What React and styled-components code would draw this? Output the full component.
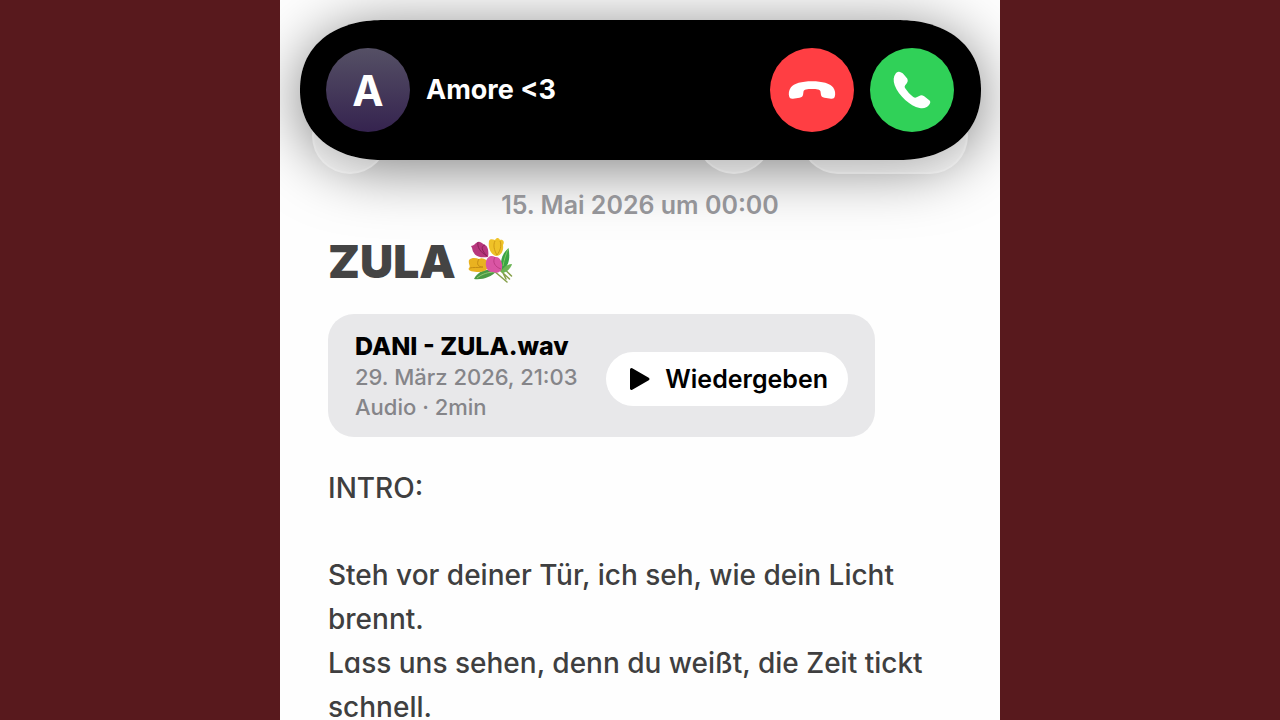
/**
 * Note screen with an incoming call banner on top.
 *
 * The banner floats over the note; the toolbar buttons of the note only peek
 * out below it. The note itself holds a title, an audio attachment and lyrics.
 */

import styled, { createGlobalStyle, css } from 'styled-components';

/* ── Data ───────────────────────────────────────── */

const CALLER = { initial: 'A', name: 'Amore <3' };

const NOTE = {
  date: '15. Mai 2026 um 00:00',
  title: 'ZULA',
  section: 'INTRO:',
  lines: [
    'Steh vor deiner Tür, ich seh, wie dein Licht brennt.',
    'Lass uns sehen, denn du weißt, die Zeit tickt schnell.',
  ],
};

const AUDIO = {
  name: 'DANI - ZULA.wav',
  recorded: '29. März 2026, 21:03',
  info: 'Audio · 2min',
};

/* ── Icons ──────────────────────────────────────── */

function HangUpIcon() {
  return (
    <svg width="84" height="84" viewBox="0 0 84 84" fill="#fff" aria-hidden="true">
      <path d="M42 33.2C31.5 33.2 24 35.4 20.8 39.4C18.8 42 18.4 45.7 19.2 48.6C19.7 50.4 21 51 23 50.7L29.6 49.7C31.8 49.3 32.8 48.2 33.1 46.4L33.5 43.6C33.8 42.3 34.5 41.8 36 41.5C37.8 41.1 39.6 41 42 41C44.4 41 46.2 41.1 48 41.5C49.5 41.8 50.2 42.3 50.5 43.6L50.9 46.4C51.2 48.2 52.2 49.3 54.4 49.7L61 50.7C63 51 64.3 50.4 64.8 48.6C65.6 45.7 65.2 42 63.2 39.4C60 35.4 52.5 33.2 42 33.2Z" />
    </svg>
  );
}

function AnswerIcon() {
  return (
    <svg width="84" height="84" viewBox="0 0 84 84" fill="#fff" aria-hidden="true">
      <path d="M29.8 24C28.2 23.2 27 23.9 25.7 25.6C23.3 28.8 23.1 32.8 24.7 37.2C26.7 42.6 30.5 47.6 35.2 51.9C39.8 56 44.8 58.9 49.6 59.9C54 60.7 57.2 59.5 59.2 56.7C60.4 55 60.7 53.5 59.6 52.4L54.2 48.3C52.5 47.1 50.7 47 49.2 47.9L46.6 49.3C45.5 49.9 44.5 49.8 43.3 48.9C40.1 46.5 37.3 43.4 35.2 40.2C34.5 39.1 34.5 38.1 35.2 37.2L36.8 35.2C37.9 33.8 38 32.2 37.2 30.6L33.6 26.2C32.4 24.9 31 24.4 29.8 24Z" />
    </svg>
  );
}

function PlayIcon() {
  return (
    <svg width="22" height="24" viewBox="0 0 22 24" aria-hidden="true">
      <path d="M2.5 2.5L19 12L2.5 21.5Z" fill="#000" stroke="#000" strokeWidth="3" strokeLinejoin="round" />
    </svg>
  );
}

function BouquetIcon() {
  return (
    <svg width="48" height="48" viewBox="0 0 48 48" role="img" aria-label="Blumenstrauß">
      {/* stems and leaves */}
      <path d="M23 25L41.5 42M26 22L43.5 39M19 28L39 45M30 26L38 42" fill="none" stroke="#86a04a" strokeWidth="1.5" strokeLinecap="round" />
      <path d="M33 31C32 21 36 15 40.500 11C42 19 42 27 35 34Z" fill="#3ba345" />
      <path d="M35 29C36 23 38 17 40 12" fill="none" stroke="#7ccc5c" strokeWidth="1" />
      <path d="M6 42C10 34 19 31 29 34C23 40 15 43 6 42Z" fill="#4a9a45" />
      <path d="M9 41C14 37 20 35 27 35" fill="none" stroke="#93c973" strokeWidth="1" />
      <path d="M33 34C37 29 40 27 44 27C43 31 39 35 35 36Z" fill="#6bb455" />
      {/* tulips */}
      <path d="M21 4C23 1 25 3 27 3C29 0 31 1 32 3C35 2 37 5 35 8C36 14 33 19 28 19C22 17 20 10 21 4Z" fill="#efc228" />
      <path d="M27 4C25 8 26 13 29 18M32 4C34 9 32 14 29 18" fill="none" stroke="#cf9a15" strokeWidth="1" />
      <path d="M1 23C4 20 8 21 11 22C15 20 19 23 21 26C21 31 18 35 11 35C4 35 -1 33 1 31C3 29 0 27 1 23Z" fill="#e9b220" />
      <path d="M11 22C8 27 10 30 15 30C9 31 5 30 2 31" fill="none" stroke="#c48c14" strokeWidth="1" />
      <path d="M3 9C6 9 7 6 10 5C13 4 14 7 17 8C20 9 21 15 20 20C14 21 8 20 6 16C4 14 5 12 3 9Z" fill="#b7377d" />
      <path d="M10 5C9 10 12 15 19 19M17 8C13 9 13 13 19 19" fill="none" stroke="#8c2059" strokeWidth="1" />
      <path d="M18 25C19 19 24 18 27 20C32 19 35 26 34 31C33 35 29 37 25 35C20 36 17 30 18 25Z" fill="#da55a4" />
      <path d="M27 20C24 25 27 30 33 32" fill="none" stroke="#bd3c84" strokeWidth="1" />
    </svg>
  );
}

/* ── Component ──────────────────────────────────── */

export default function App() {
  return (
    <>
      <GlobalStyle />
      <Page>
        <Screen>
          <CallBanner aria-label="Eingehender Anruf">
            <Avatar>{CALLER.initial}</Avatar>
            <CallerName>{CALLER.name}</CallerName>
            <CallActions>
              <CallButton type="button" $color="#ff3e43" aria-label="Ablehnen">
                <HangUpIcon />
              </CallButton>
              <CallButton type="button" $color="#30d158" aria-label="Annehmen">
                <AnswerIcon />
              </CallButton>
            </CallActions>
          </CallBanner>

          <Toolbar>
            <ToolButton type="button" aria-label="Zurück" />
            <ToolGroup>
              <ToolButton type="button" aria-label="Widerrufen" />
              <ToolButton type="button" $wide aria-label="Teilen" />
            </ToolGroup>
          </Toolbar>

          <Note>
            <NoteDate>{NOTE.date}</NoteDate>
            <NoteTitle>
              {NOTE.title}
              <BouquetIcon />
            </NoteTitle>

            <Attachment>
              <div>
                <FileName>{AUDIO.name}</FileName>
                <FileMeta>{AUDIO.recorded}</FileMeta>
                <FileMeta>{AUDIO.info}</FileMeta>
              </div>
              <PlayButton type="button">
                <PlayIcon />
                Wiedergeben
              </PlayButton>
            </Attachment>

            <Lyrics>
              <p>{NOTE.section}</p>
              <div>
                {NOTE.lines.map((line) => (
                  <p key={line}>{line}</p>
                ))}
              </div>
            </Lyrics>
          </Note>
        </Screen>
      </Page>
    </>
  );
}

/* ── styled-components ──────────────────────────── */

const GlobalStyle = createGlobalStyle`
  * {
    box-sizing: border-box;
  }

  html {
    scrollbar-width: none;
  }

  body {
    margin: 0;
    background: #58191d;
    font-family: Inter, 'Liberation Sans', sans-serif;
  }

  h1, h2, p {
    margin: 0;
  }

  button {
    font: inherit;
    border: 0;
    padding: 0;
    cursor: pointer;
  }

  svg {
    display: block;
    flex: none;
  }
`;

/* Place and outline of the banner, shared with the shadow below it */
const bannerShape = css`
  position: absolute;
  top: 20px;
  left: 20px;
  right: 19px;
  height: 140px;
  border-radius: 70px;

  @supports (corner-shape: squircle) {
    border-radius: 84px / 70px;
    corner-shape: superellipse(1.15);
  }
`;

const Page = styled.div`
  display: flex;
  justify-content: center;
  min-height: 100vh;
`;

const Screen = styled.main`
  position: relative;
  width: 100%;
  max-width: 720px;
  overflow: hidden;
  background: #fefefe;

  /* The shadow falls under the toolbar buttons, the banner covers them */
  &::before {
    content: '';
    ${bannerShape}
    box-shadow: 0 8px 60px rgba(0, 0, 0, 0.5);
  }
`;

const CallBanner = styled.section`
  ${bannerShape}
  z-index: 2;
  display: flex;
  align-items: center;
  gap: 16px;
  padding: 0 27px 0 26px;
  background: #000;
  color: #fff;
`;

const Avatar = styled.div`
  display: flex;
  align-items: center;
  justify-content: center;
  width: 84px;
  height: 84px;
  border-radius: 50%;
  background: linear-gradient(#555065, #35234f);
  font-size: 42px;
  font-weight: 700;
`;

const CallerName = styled.h2`
  font-size: 27px;
  font-weight: 700;
  line-height: 36px;
`;

const CallActions = styled.div`
  display: flex;
  gap: 16px;
  margin-left: auto;
`;

const CallButton = styled.button`
  width: 84px;
  height: 84px;
  border-radius: 50%;
  background: ${({ $color }) => $color};
`;

const Toolbar = styled.nav`
  position: relative;
  z-index: 1;
  display: flex;
  align-items: flex-end;
  justify-content: space-between;
  height: 174px;
  padding: 0 32px;
`;

const ToolGroup = styled.div`
  display: flex;
  gap: 28px;
`;

const ToolButton = styled.button`
  width: ${({ $wide }) => ($wide ? 168 : 76)}px;
  height: 76px;
  border: 2px solid rgba(255, 255, 255, 0.12);
  border-radius: 38px;
  background: rgba(255, 255, 255, 0.3);
`;

const Note = styled.article`
  position: relative;
  padding: 12px 48px 0;
`;

const NoteDate = styled.p`
  color: #949498;
  font-size: 25px;
  font-weight: 600;
  line-height: 38px;
  text-align: center;
`;

const NoteTitle = styled.h1`
  display: flex;
  align-items: center;
  gap: 12px;
  margin: 8px 0 24px;
  color: #444;
  font-size: 46px;
  font-weight: 900;
  line-height: 58px;
`;

const Attachment = styled.section`
  display: flex;
  align-items: center;
  justify-content: space-between;
  gap: 24px;
  width: fit-content;
  min-width: 547px;
  padding: 16px 27px 15px;
  border-radius: 26px;
  background: #e8e8ea;
`;

const FileName = styled.h2`
  font-size: 25px;
  font-weight: 800;
  line-height: 32px;
`;

const FileMeta = styled.p`
  color: #858589;
  font-size: 22px;
  font-weight: 500;
  line-height: 30px;
`;

const PlayButton = styled.button`
  display: flex;
  align-items: center;
  gap: 14px;
  height: 54px;
  margin-top: 6px;
  padding: 0 20px 0 23px;
  border-radius: 27px;
  background: #fff;
  color: #000;
  font-size: 25px;
  font-weight: 600;
`;

const Lyrics = styled.section`
  display: flex;
  flex-direction: column;
  gap: 43px;
  margin-top: 29px;
  color: #3f3f40;
  font-size: 28px;
  font-weight: 500;
  line-height: 44px;
  font-feature-settings: 'cv11';
`;
